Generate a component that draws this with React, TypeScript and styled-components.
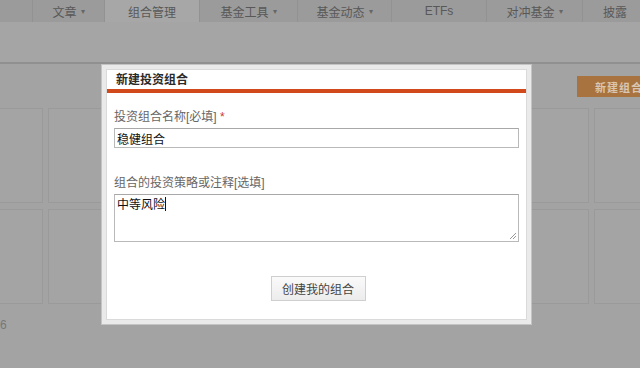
import styled, { createGlobalStyle } from 'styled-components';

const GlobalStyle = createGlobalStyle`
  html, body {
    margin: 0;
    padding: 0;
    background: #a3a3a3;
    font-family: "Liberation Sans", "Noto Sans CJK SC", sans-serif;
    font-size: 12px;
  }
`;

const Page = styled.div`
  position: relative;
  width: 640px;
  height: 368px;
  overflow: hidden;
  background: #a3a3a3;
`;

const NavBar = styled.nav`
  display: flex;
  height: 22px;
  background: #9b9b9b;
`;

const Tab = styled.div<{ $w: number; $active?: boolean }>`
  flex: 0 0 ${p => p.$w}px;
  display: flex;
  align-items: center;
  justify-content: center;
  gap: 4px;
  border-left: 1px solid #929292;
  background: ${p => (p.$active ? '#a7a7a7' : '#9b9b9b')};
  color: #585858;
  font-size: 12px;
  &:first-child {
    border-left: none;
  }
`;

const Caret = styled.span`
  font-size: 8px;
  color: #666;
`;

const SubBar = styled.div`
  height: 40px;
  background: #a5a5a5;
  border-bottom: 2px solid #909090;
`;

const Content = styled.div`
  padding-top: 12px;
`;

const Toolbar = styled.div`
  display: flex;
  justify-content: flex-end;
  height: 21px;
  margin-bottom: 11px;
`;

const NewButton = styled.div`
  box-sizing: border-box;
  width: 74px;
  margin-right: -11px;
  display: flex;
  align-items: center;
  padding-left: 18px;
  background: #a9733f;
  color: #d8c6b2;
  font-size: 11px;
  font-weight: bold;
  letter-spacing: 1px;
`;

const CardGrid = styled.div`
  display: grid;
  grid-template-columns: repeat(8, 86px);
  grid-auto-rows: 95px;
  gap: 6px 5px;
  margin-left: -43px;
`;

const Card = styled.div`
  background: #a4a4a4;
  border: 1px solid #9a9a9a;
`;

const Footer = styled.div`
  margin-top: 14px;
  color: #777;
  font-size: 12px;
`;

const Modal = styled.div`
  position: absolute;
  left: 101px;
  top: 64px;
  width: 431px;
  height: 261px;
  box-sizing: border-box;
  padding: 4px;
  background: #eaeaea;
  border: 1px solid #c4c4c4;
`;

const ModalInner = styled.div`
  height: 100%;
  box-sizing: border-box;
  background: #fff;
  border: 1px solid #dadada;
`;

const ModalTitle = styled.div`
  height: 19px;
  line-height: 20px;
  padding-left: 9px;
  font-size: 12px;
  font-weight: bold;
  color: #2a2a2a;
`;

const AccentBar = styled.div`
  height: 4px;
  background: #d24a1c;
`;

const ModalBody = styled.div`
  padding: 15px 8px 0 7px;
`;

const Label = styled.div<{ $top?: number }>`
  line-height: 18px;
  margin-top: ${p => p.$top ?? 0}px;
  color: #666;
  font-size: 12px;
`;

const Required = styled.span`
  color: #d0392b;
`;

const TextInput = styled.input`
  display: block;
  box-sizing: border-box;
  width: 405px;
  height: 20px;
  margin: 2px 0 0;
  padding: 0 2px;
  border: 1px solid #b9b9b9;
  border-top-color: #a8a8a8;
  font-family: "Liberation Sans", "Noto Sans CJK SC", sans-serif;
  font-size: 12px;
  color: #111;
  outline: none;
`;

const TextArea = styled.div`
  position: relative;
  box-sizing: border-box;
  width: 405px;
  height: 48px;
  margin-top: 2px;
  padding: 2px 2px;
  border: 1px solid #b9b9b9;
  border-top-color: #a8a8a8;
  color: #111;
  font-size: 12px;
  line-height: 15px;
`;

const TypingCaret = styled.span`
  display: inline-block;
  width: 1px;
  height: 14px;
  vertical-align: -2px;
  background: #111;
`;

const Grip = styled.svg`
  position: absolute;
  right: 1px;
  bottom: 1px;
`;

const Actions = styled.div`
  display: flex;
  justify-content: center;
  padding-left: 4px;
  margin-top: 34px;
`;

const SubmitButton = styled.button`
  width: 95px;
  height: 25px;
  border: 1px solid #cfcfcf;
  background: linear-gradient(#fafafa, #ececec);
  color: #444;
  font-family: "Liberation Sans", "Noto Sans CJK SC", sans-serif;
  font-size: 12px;
  padding: 0;
`;

const tabs = [
  { w: 32, label: '' },
  { w: 71, label: '文章', drop: true },
  { w: 94, label: '组合管理', active: true },
  { w: 97, label: '基金工具', drop: true },
  { w: 93, label: '基金动态', drop: true },
  { w: 94, label: 'ETFs' },
  { w: 95, label: '对冲基金', drop: true },
  { w: 64, label: '披露' },
];

export default function App() {
  return (
    <Page>
      <GlobalStyle />
      <NavBar>
        {tabs.map((t, i) => (
          <Tab key={i} $w={t.w} $active={t.active}>
            {t.label}
            {t.drop && <Caret>▾</Caret>}
          </Tab>
        ))}
      </NavBar>
      <SubBar />
      <Content>
        <Toolbar>
          <NewButton>新建组合</NewButton>
        </Toolbar>
        <CardGrid>
          {Array.from({ length: 16 }).map((_, i) => (
            <Card key={i} />
          ))}
        </CardGrid>
        <Footer>6</Footer>
      </Content>

      <Modal>
        <ModalInner>
          <ModalTitle>新建投资组合</ModalTitle>
          <AccentBar />
          <ModalBody>
            <Label>
              投资组合名称[必填] <Required>*</Required>
            </Label>
            <TextInput readOnly value="稳健组合" />
            <Label $top={26}>组合的投资策略或注释[选填]</Label>
            <TextArea>
              中等风险<TypingCaret />
              <Grip width="9" height="9" viewBox="0 0 9 9">
                <path d="M8 2 L2 8 M8 5 L5 8" stroke="#999" strokeWidth="1" />
              </Grip>
            </TextArea>
            <Actions>
              <SubmitButton>创建我的组合</SubmitButton>
            </Actions>
          </ModalBody>
        </ModalInner>
      </Modal>
    </Page>
  );
}
